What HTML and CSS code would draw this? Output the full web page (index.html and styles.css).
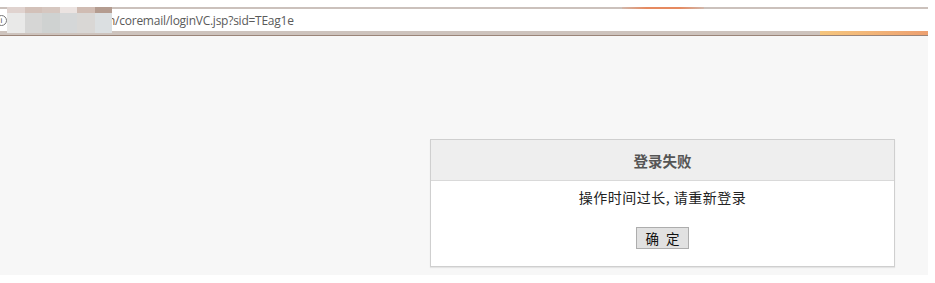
FILE: index.html
```html
<!DOCTYPE html>
<html lang="zh-CN">
<head>
<meta charset="utf-8">
<title>登录失败</title>
<link rel="stylesheet" href="styles.css">
</head>
<body>
<div class="addr">
  <div class="addr-top"><span class="orange-a"></span></div>
  <div class="addr-field">
    <span class="info-icon">i</span>
    <div class="blur">
      <div class="brow top">
        <i class="c1"></i><i class="c2"></i><i class="c3"></i><i class="c4"></i><i class="c5"></i><i class="c6"></i>
      </div>
      <div class="brow bottom">
        <i class="d1"></i><i class="d2"></i><i class="d3"></i><i class="d4"></i><i class="d5"></i><i class="d6"></i>
      </div>
    </div>
    <span class="url"><span class="cut">n</span>/coremail/loginVC.jsp?sid=TEag1e</span>
  </div>
  <div class="addr-bottom"><span class="orange-b"></span></div>
  <div class="addr-line"></div>
</div>
<div class="page">
  <div class="dialog">
    <div class="dlg-head">登录失败</div>
    <div class="dlg-body">
      <p class="msg">操作时间过长, 请重新登录</p>
      <button class="btn" type="button">确 定</button>
    </div>
  </div>
</div>
</body>
</html>
```

FILE: styles.css
```css
html, body {
  margin: 0;
  padding: 0;
  background: #ffffff;
}
body {
  width: 935px;
  height: 283px;
  overflow: hidden;
  font-family: "Noto Sans CJK SC", "Noto Sans", sans-serif;
}
.addr {
  width: 928px;
  display: flex;
  flex-direction: column;
}
.addr-top {
  margin-top: 7px;
  height: 2px;
  background: #cbc1bc;
  position: relative;
}
.orange-a {
  position: absolute;
  left: 622px;
  top: 0;
  width: 82px;
  height: 2px;
  background: linear-gradient(90deg, rgba(232,140,100,0.2), #e68a60 30%, #e68a60 70%, rgba(232,140,100,0.2));
}
.addr-field {
  height: 22px;
  background: #ffffff;
  display: flex;
  align-items: center;
  position: relative;
}
.info-icon {
  position: absolute;
  left: -4px;
  top: 6px;
  width: 9px;
  height: 9px;
  border: 1px solid #777;
  border-radius: 50%;
  font: 8px/9px "Liberation Sans", sans-serif;
  color: #555;
  text-align: center;
}
.blur {
  position: absolute;
  left: 7px;
  top: -2px;
  width: 105px;
  height: 26px;
  display: flex;
  flex-direction: column;
  z-index: 1;
}
.brow {
  display: flex;
}
.brow.top { height: 6px; }
.brow.bottom { height: 20px; }
.brow i { flex: 1; }
.c1 { background: #e0d3cf; }
.c2 { background: #d3c1b9; }
.c3 { background: #d6c7c0; }
.c4 { background: #ebe3e1; }
.c5 { background: #d0bcb3; }
.c6 { background: #b49c90; }
.d1 { background: #e9e9e8; }
.d2 { background: #d6d6d5; }
.d3 { background: #cfd2d1; }
.d4 { background: #d5d7d8; }
.d5 { background: #d9d7d5; }
.d6 { background: #dbdfe1; }
.url {
  margin-left: 108px;
  font: 12px/22px "Open Sans", "Noto Sans", sans-serif;
  color: #5a5a5a;
  letter-spacing: -0.25px;
  padding-top: 1px;
}
.cut {
  color: #7a5a3a;
}
.addr-bottom {
  height: 4px;
  background: #cdc3bd;
  position: relative;
}
.orange-b {
  position: absolute;
  left: 820px;
  right: 0;
  top: 0;
  height: 4px;
  background: linear-gradient(90deg, #f5c57d, #f3b879 40%, #eda070);
}
.addr-line {
  height: 1px;
  background: #9a8478;
}
.page {
  width: 928px;
  height: 239px;
  background: #f7f7f7;
  display: flex;
  align-items: flex-start;
  padding: 103px 0 0 430px;
  box-sizing: border-box;
}
.dialog {
  width: 463px;
  border: 1px solid #cfcfcf;
  background: #ffffff;
  box-shadow: 0 1px 1px #e4e4e4;
}
.dlg-head {
  height: 40px;
  background: #eeeeee;
  border-bottom: 1px solid #d9d9d9;
  text-align: center;
  font-weight: bold;
  font-size: 14.5px;
  line-height: 42px;
  color: #555555;
}
.dlg-body {
  height: 85px;
  display: flex;
  flex-direction: column;
  align-items: center;
}
.msg {
  margin: 6px 0 0;
  font-size: 14px;
  line-height: 20px;
  letter-spacing: 0.5px;
  color: #222222;
}
.btn {
  margin-top: 20px;
  width: 53px;
  height: 22px;
  padding: 0 0 0 2px;
  border: 1px solid #adadad;
  background: #e1e1e1;
  font-family: "Noto Sans CJK SC", sans-serif;
  font-size: 13.5px;
  line-height: 20px;
  letter-spacing: 2px;
  color: #111;
}
```
